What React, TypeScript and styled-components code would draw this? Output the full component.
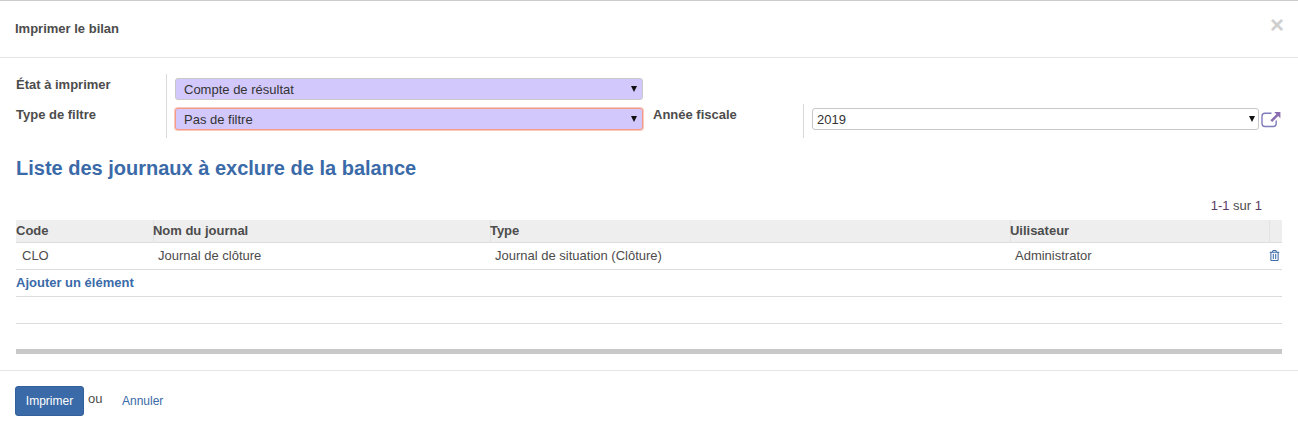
import React from "react";
import styled, { createGlobalStyle } from "styled-components";
import { FaRegTrashAlt } from "react-icons/fa";

const Global = createGlobalStyle`
  html, body { margin: 0; padding: 0; background: #fff; }
  body { font-family: "Liberation Sans", Arial, sans-serif; font-size: 13px; color: #4c4c4c; }
`;

const Dialog = styled.div`
  width: 1298px;
  height: 431px;
  box-sizing: border-box;
  border-top: 1px solid #ccc;
  display: flex;
  flex-direction: column;
  overflow: hidden;
`;

const Header = styled.header`
  height: 54px;
  box-sizing: content-box;
  padding: 0 15px 2px;
  border-bottom: 1px solid #e5e5e5;
  display: flex;
  align-items: center;
  justify-content: space-between;
`;

const Title = styled.h4`
  margin: 0;
  font-size: 13px;
  font-weight: bold;
  color: #4c4c4c;
`;

const Close = styled.span`
  font-size: 24px;
  line-height: 1;
  font-weight: bold;
  color: #cfcfcf;
  margin: -6px -1px 0 0;
`;

const Body = styled.main`
  padding: 16px 16px 0;
`;

const FormGrid = styled.div`
  display: grid;
  grid-template-columns: 150px 487px 150px 479px;
  grid-template-rows: 30px 34px;
`;

const Label = styled.label`
  font-size: 13px;
  font-weight: bold;
  color: #4c4c4c;
  padding-top: 3px;
  line-height: 15px;
`;

const Field = styled.div`
  border-left: 1px solid #d9d9d9;
  padding: 4px 0 0 8px;
  display: flex;
  align-items: flex-start;
`;

const SelectBox = styled.div<{ $arrowRight: number }>`
  position: relative;
  display: block;
  height: 22px;
  &::after {
    content: "";
    position: absolute;
    top: 8px;
    right: ${(p) => p.$arrowRight}px;
    border-style: solid;
    border-width: 6px 3px 0;
    border-color: #111 transparent transparent;
    pointer-events: none;
  }
`;

const Select = styled.select<{ $tone?: "required" | "error" | "plain" }>`
  display: block;
  appearance: none;
  width: ${(p) => (p.$tone === "plain" ? "447px" : "468px")};
  height: 22px;
  box-sizing: border-box;
  margin: 0;
  font-family: "Liberation Sans", Arial, sans-serif;
  font-size: 13px;
  color: #333;
  border-radius: 3px;
  padding: 0 0 0 ${(p) => (p.$tone === "plain" ? "4px" : "8px")};
  background: ${(p) => (p.$tone === "plain" ? "#fff" : "#d2c8fb")};
  border: 1px solid ${(p) => (p.$tone === "error" ? "#f59a85" : "#c8c8c8")};
  box-shadow: ${(p) => (p.$tone === "error" ? "0 0 0 1px rgba(245,154,133,.55)" : "none")};
  outline: none;
`;

const OpenIcon = styled.svg`
  display: block;
  margin: 0 0 0 2px;
  width: 20px;
  height: 20px;
  flex: none;
`;

const Heading = styled.h2`
  margin: 18px 0 0;
  font-size: 20px;
  line-height: 24px;
  font-weight: bold;
  color: #3a6aa8;
`;

const Pager = styled.div`
  margin-top: 18px;
  height: 15px;
  line-height: 15px;
  text-align: right;
  padding-right: 20px;
  color: #4c4c4c;
`;

const PagerCount = styled.span`
  color: #5b3a63;
`;

const Table = styled.table`
  margin-top: 7px;
  width: 1266px;
  border-collapse: collapse;
  table-layout: fixed;
`;

const HeadRow = styled.tr`
  background: #eee;
  height: 22px;
  border-bottom: 1px solid #ddd;
`;

const Th = styled.th`
  text-align: left;
  font-size: 13px;
  font-weight: bold;
  color: #4c4c4c;
  padding: 0;
  border-left: 1px solid #e3e3e3;
  text-indent: -0.6px;
  &:first-child { border-left: 0; text-indent: 0; }
`;

const Row = styled.tr`
  height: 27px;
  border-bottom: 1px solid #ddd;
`;

const Td = styled.td`
  padding: 0 0 0 5px;
  font-size: 13px;
  color: #4c4c4c;
  &:first-child { padding-left: 6px; }
`;

const TrashCell = styled.td`
  padding: 0;
  color: #3a6aa8;
  font-size: 11px;
  text-align: right;
  svg { display: block; margin: 0 2px 0 auto; }
`;

const AddLink = styled.a`
  color: #3a6aa8;
  font-weight: bold;
  font-size: 13px;
`;

const AddCell = styled.td`
  padding: 0;
`;

const Divider = styled.div`
  margin-top: 25px;
  width: 1266px;
  height: 5px;
  background: #c8c8c8;
`;

const Footer = styled.footer`
  border-top: 1px solid #e5e5e5;
  margin-top: 16px;
  padding: 15px 15px 0;
  display: flex;
  align-items: flex-start;
`;

const PrimaryButton = styled.button`
  width: 69px;
  height: 30px;
  box-sizing: border-box;
  background: #3a6aa8;
  border: 1px solid #33609a;
  border-radius: 3px;
  color: #fff;
  font-family: "Liberation Sans", Arial, sans-serif;
  font-size: 12px;
  padding: 0;
`;

const Or = styled.span`
  margin: 5px 0 0 4px;
  line-height: 15px;
  color: #4c4c4c;
`;

const Cancel = styled.a`
  margin: 8px 0 0 19.5px;
  font-size: 12px;
  line-height: 14px;
  color: #3a6aa8;
`;

export default function App() {
  return (
    <>
      <Global />
      <Dialog>
        <Header>
          <Title>Imprimer le bilan</Title>
          <Close>×</Close>
        </Header>
        <Body>
          <FormGrid>
            <Label>État à imprimer</Label>
            <Field>
              <SelectBox $arrowRight={6}>
                <Select $tone="required" defaultValue="a">
                  <option value="a">Compte de résultat</option>
                </Select>
              </SelectBox>
            </Field>
            <span />
            <span />
            <Label>Type de filtre</Label>
            <Field>
              <SelectBox $arrowRight={6}>
                <Select $tone="error" defaultValue="a">
                  <option value="a">Pas de filtre</option>
                </Select>
              </SelectBox>
            </Field>
            <Label>Année fiscale</Label>
            <Field>
              <SelectBox $arrowRight={4}>
                <Select $tone="plain" defaultValue="a">
                  <option value="a">2019</option>
                </Select>
              </SelectBox>
              <OpenIcon viewBox="0 0 20 20" aria-hidden="true">
                <path
                  d="M15.2 12.5v3a3 3 0 0 1-3 3H4a3 3 0 0 1-3-3V8.3a3 3 0 0 1 3-3h6.5"
                  fill="none"
                  stroke="#7f7cbc"
                  strokeWidth="1.4"
                />
                <path d="M13.2 4h6.2v6.2l-2.2-2.2-6 6-1.8-1.8 6-6z" fill="#8a6db0" />
              </OpenIcon>
            </Field>
          </FormGrid>
          <Heading>Liste des journaux à exclure de la balance</Heading>
          <Pager><PagerCount>1-1</PagerCount> sur <PagerCount>1</PagerCount></Pager>
          <Table>
            <colgroup>
              <col style={{ width: 137 }} />
              <col style={{ width: 337 }} />
              <col style={{ width: 520 }} />
              <col style={{ width: 259 }} />
              <col style={{ width: 13 }} />
            </colgroup>
            <thead>
              <HeadRow>
                <Th>Code</Th>
                <Th>Nom du journal</Th>
                <Th>Type</Th>
                <Th>Uilisateur</Th>
                <Th />
              </HeadRow>
            </thead>
            <tbody>
              <Row>
                <Td>CLO</Td>
                <Td>Journal de clôture</Td>
                <Td>Journal de situation (Clôture)</Td>
                <Td>Administrator</Td>
                <TrashCell><FaRegTrashAlt /></TrashCell>
              </Row>
              <Row>
                <AddCell colSpan={5}><AddLink>Ajouter un élément</AddLink></AddCell>
              </Row>
              <Row>
                <AddCell colSpan={5} />
              </Row>
            </tbody>
          </Table>
          <Divider />
        </Body>
        <Footer>
          <PrimaryButton>Imprimer</PrimaryButton>
          <Or>ou</Or>
          <Cancel>Annuler</Cancel>
        </Footer>
      </Dialog>
    </>
  );
}
